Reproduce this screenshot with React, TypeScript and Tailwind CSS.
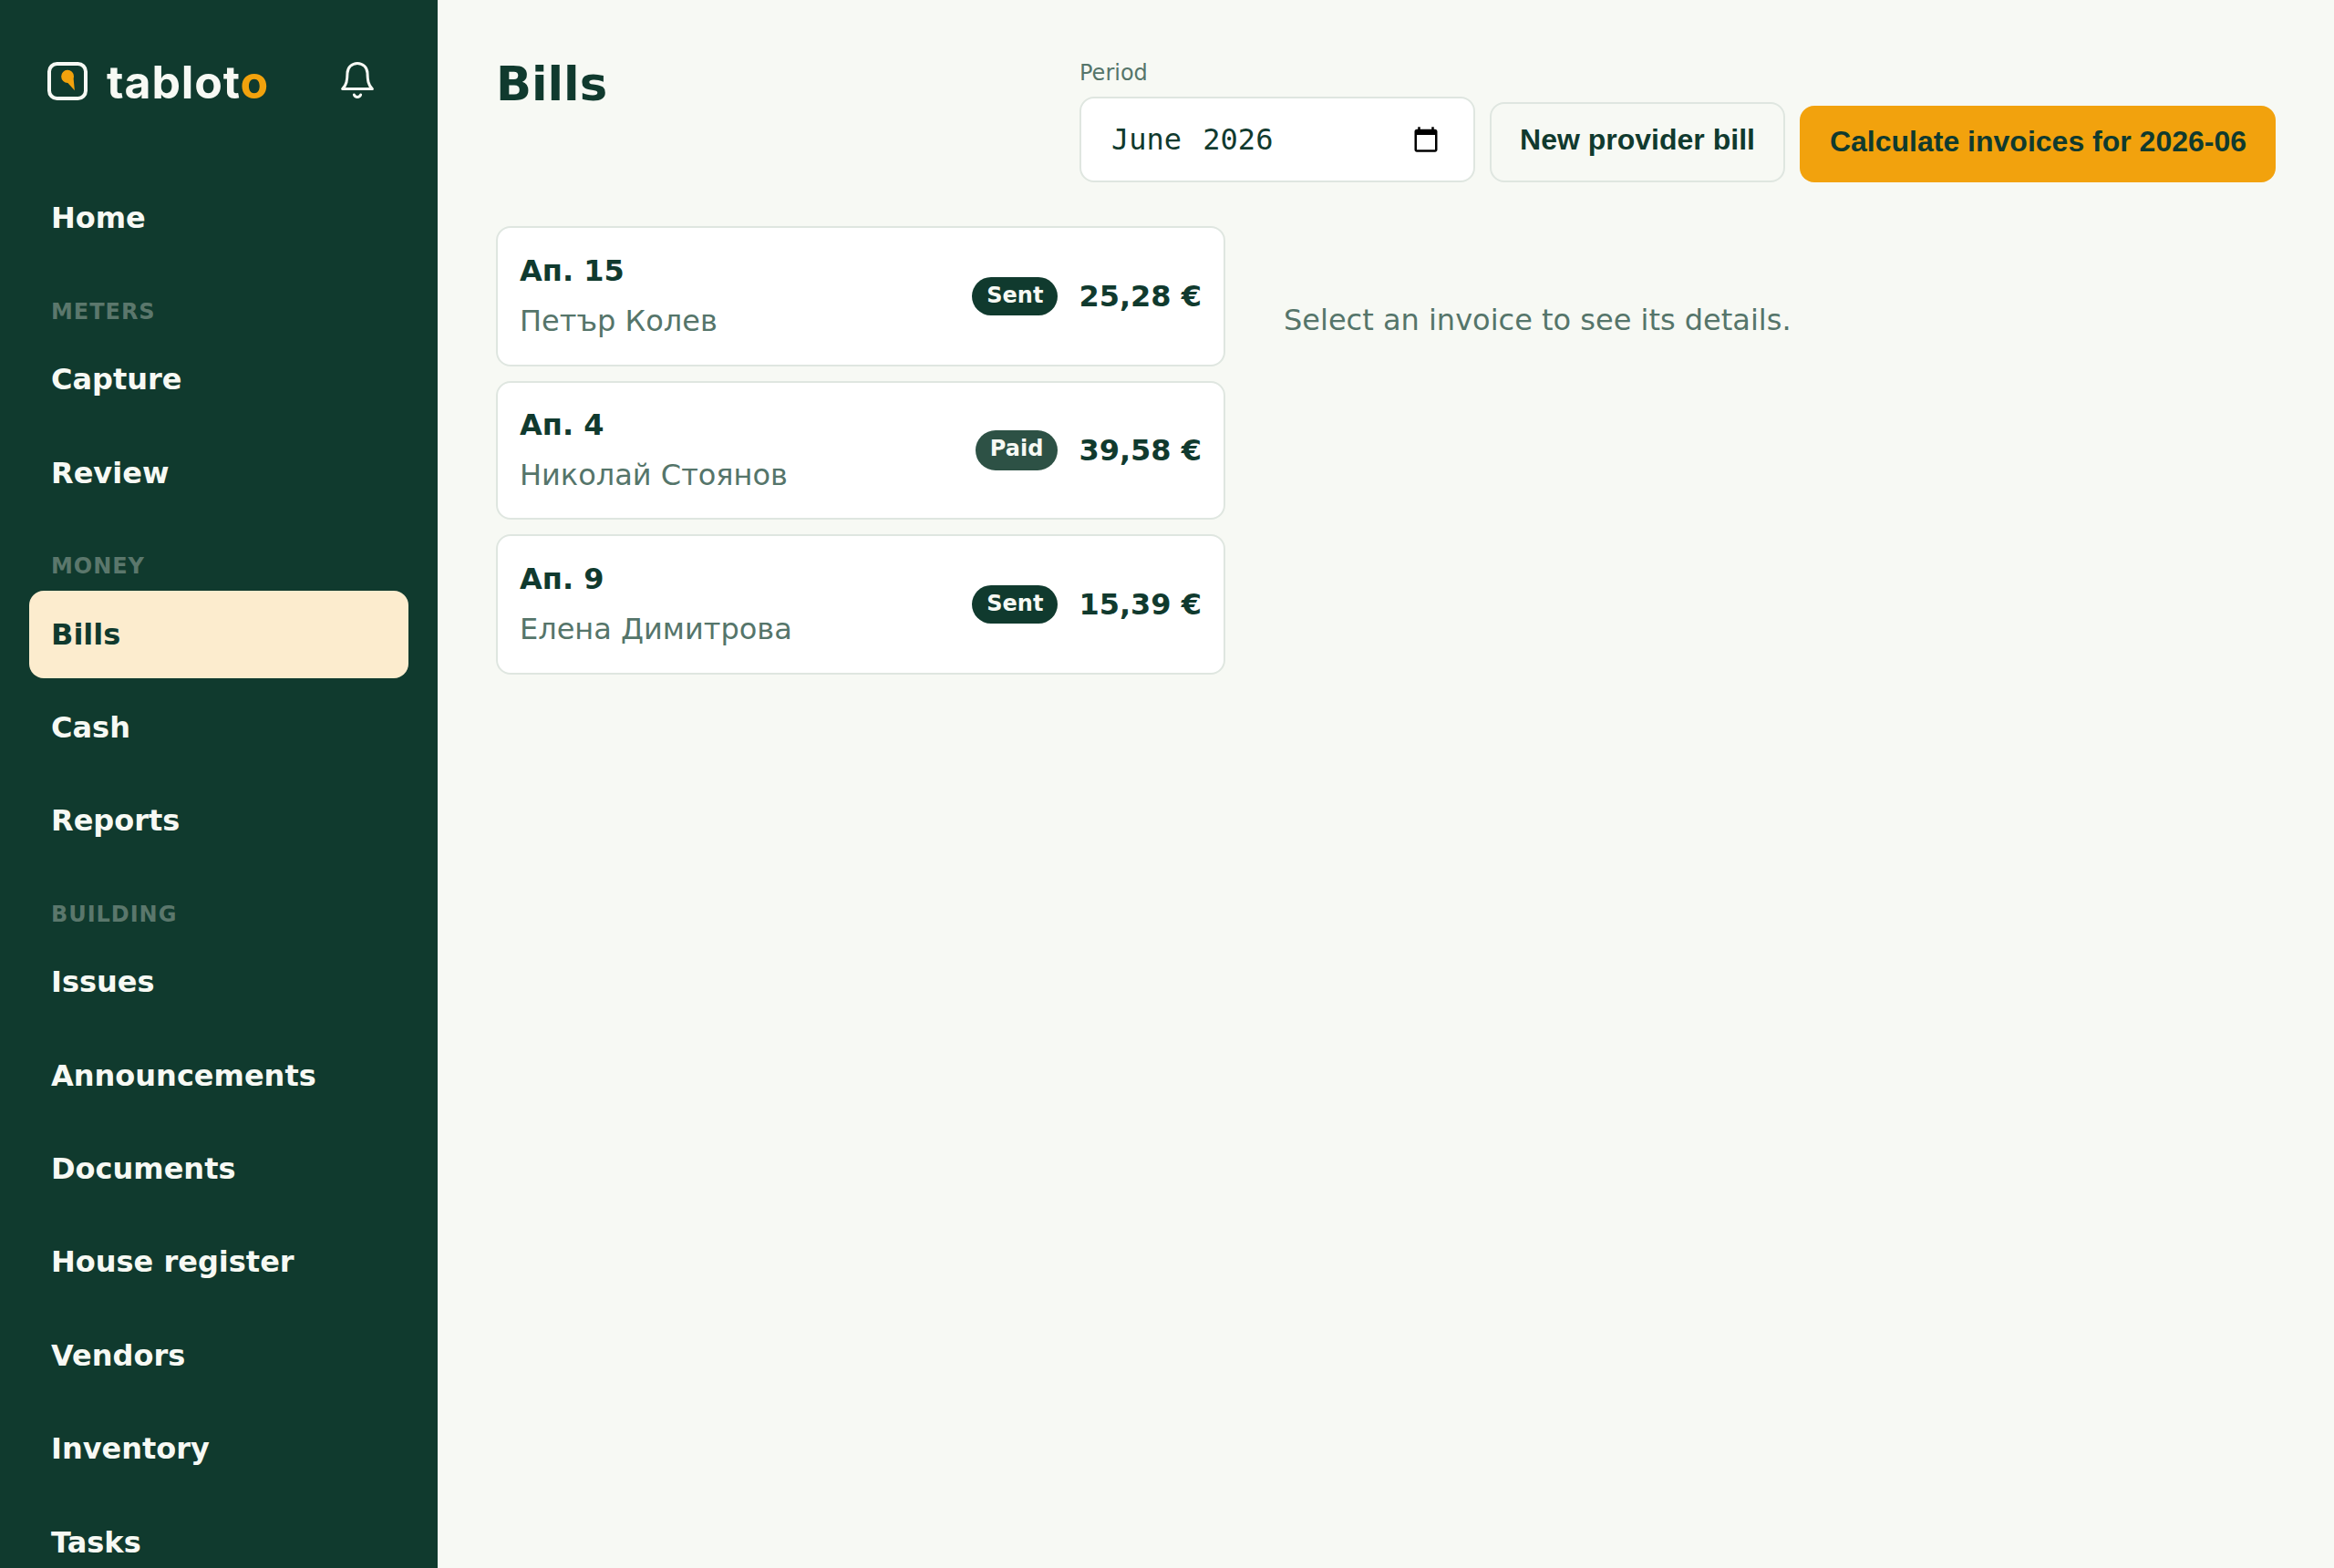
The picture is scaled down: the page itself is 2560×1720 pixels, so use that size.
import { ReactNode } from 'react';
import clsx from 'clsx';

interface NavGroup {
  title?: string;
  items: string[];
}

interface Invoice {
  unit: string;
  owner: string;
  status: 'Sent' | 'Paid';
  total: string;
}

const navGroups: NavGroup[] = [
  { items: ['Home'] },
  { title: 'Meters', items: ['Capture', 'Review'] },
  { title: 'Money', items: ['Bills', 'Cash', 'Reports'] },
  {
    title: 'Building',
    items: [
      'Issues',
      'Announcements',
      'Documents',
      'House register',
      'Vendors',
      'Inventory',
      'Tasks',
    ],
  },
];

const invoices: Invoice[] = [
  { unit: 'Ап. 15', owner: 'Петър Колев', status: 'Sent', total: '25,28 €' },
  { unit: 'Ап. 4', owner: 'Николай Стоянов', status: 'Paid', total: '39,58 €' },
  { unit: 'Ап. 9', owner: 'Елена Димитрова', status: 'Sent', total: '15,39 €' },
];

function Logo() {
  return (
    <div className="flex items-center">
      <svg width="44" height="42" viewBox="0 0 44 42" fill="none">
        <rect x="2" y="2" width="40" height="38" rx="8.5" stroke="#f7f9f4" strokeWidth="4" />
        <path
          d="M22 8.800a7 7 0 0 1 7 7c0 1.200-.4 2-.300 3.200l1.200 12.200-7.500-8.300A7 7 0 1 1 22 8.800z"
          fill="#f2a20d"
        />
      </svg>
      <span className="ml-[21px] pt-px font-['Inter'] text-[50px] leading-[60px] font-bold tracking-[0.9px] text-[#f7f9f4]">
        tablot<span className="text-[#f2a20d]">o</span>
      </span>
    </div>
  );
}

function BellIcon() {
  return (
    <svg
      width="48"
      height="48"
      viewBox="0 0 24 24"
      fill="none"
      stroke="#f7f9f4"
      strokeWidth="1.5"
      strokeLinecap="round"
      strokeLinejoin="round"
    >
      <path d="M12 2.200c-3.100 0-5.400 2.400-5.500 5.400-.1 3.900-.4 6.600-2.700 8.700h16.400c-2.300-2.100-2.600-4.800-2.700-8.700-.1-3-2.400-5.400-5.500-5.400z" />
      <path d="M10.200 19.500c.6 1.600 3 1.600 3.600 0" />
    </svg>
  );
}

function Sidebar() {
  return (
    <aside className="flex h-full w-[480px] shrink-0 flex-col overflow-hidden bg-[#103a2e] px-8">
      <div className="mt-[59px] flex h-[60px] shrink-0 items-center justify-between pr-8 pl-5">
        <Logo />
        <BellIcon />
      </div>

      <nav className="mt-[72.600px] flex flex-col gap-[6.4px]">
        {navGroups.map(({ title, items }) => (
          <div key={items[0]} className="flex flex-col gap-[6.4px]">
            {title && (
              <span className="px-6 pt-[28.8px] text-2xl leading-[39.3px] font-bold tracking-[0.96px] text-[#5b776c] uppercase">
                {title}
              </span>
            )}
            {items.map((item) => (
              <a
                key={item}
                className={clsx(
                  'rounded-2xl px-6 py-[20.8px] leading-[54.4px] font-bold',
                  item === 'Bills' ? 'bg-[#fcecce] text-[#103a2e]' : 'text-[#f7f9f4]',
                )}
              >
                {item}
              </a>
            ))}
          </div>
        ))}
      </nav>
    </aside>
  );
}

function PeriodField() {
  return (
    <div className="flex flex-col">
      <span className="text-2xl leading-[43px] text-[#55756a]">Period</span>
      <div className="mt-1 flex h-[94px] w-[434px] items-center justify-between rounded-2xl border-2 border-[#dfe6e0] bg-white pr-[37px] pl-8">
        <span className="pl-px font-['DejaVu_Sans_Mono'] [word-spacing:4px]">June 2026</span>
        <svg width="30" height="30" viewBox="0 0 24 24">
          <path d="M20 3h-1V1h-2v2H7V1H5v2H4c-1.100 0-2 .9-2 2v16c0 1.100.9 2 2 2h16c1.100 0 2-.9 2-2V5c0-1.100-.9-2-2-2zm0 18H4V8h16v13z" />
        </svg>
      </div>
    </div>
  );
}

function Button({ className, children }: { className: string; children: ReactNode }) {
  return (
    <button
      type="button"
      className={clsx(
        "rounded-2xl pb-1.5 font-['Liberation_Sans'] font-bold whitespace-nowrap",
        className,
      )}
    >
      {children}
    </button>
  );
}

function InvoiceCard({ unit, owner, status, total }: Invoice) {
  return (
    <div className="flex h-[154px] items-center justify-between rounded-2xl border-2 border-[#dfe6e0] bg-white px-6 even:h-[152px]">
      <div className="flex flex-col pb-px leading-[55px]">
        <span className="font-bold">{unit}</span>
        <span className="text-[#55756a]">{owner}</span>
      </div>

      <div className="flex items-center gap-[23px]">
        <span
          className={clsx(
            'rounded-full px-4 text-2xl leading-10 font-bold text-[#f7f9f4]',
            status === 'Paid' ? 'bg-[#2d5145] pb-1' : 'bg-[#103a2e] pb-0.5',
          )}
        >
          {status}
        </span>
        <span className="font-bold">{total}</span>
      </div>
    </div>
  );
}

export default function App() {
  return (
    <div className="flex h-[1720px] w-[2560px] overflow-hidden bg-[#f7f9f4] font-['DejaVu_Sans',sans-serif] text-[32px] text-[#103a2e]">
      <Sidebar />

      <main className="flex flex-1 flex-col px-16 pt-[59px]">
        <header className="flex items-start justify-between">
          <h1 className="mt-[2px] text-[51.2px] leading-[62px] font-bold">Bills</h1>
          <div className="flex items-end gap-4">
            <PeriodField />
            <Button className="h-[88px] w-[324px] border-2 border-[#dfe6e0]">
              New provider bill
            </Button>
            <Button className="h-[84px] w-[522px] bg-[#f2a20d] pl-px">
              Calculate invoices for 2026-06
            </Button>
          </div>
        </header>

        <div className="mt-12 flex gap-16">
          <section className="flex w-[800px] flex-col gap-4">
            {invoices.map((invoice) => (
              <InvoiceCard key={invoice.unit} {...invoice} />
            ))}
          </section>
          <section className="flex-1 pt-[76px]">
            <p className="leading-[54.4px] text-[#55756a]">Select an invoice to see its details.</p>
          </section>
        </div>
      </main>
    </div>
  );
}
